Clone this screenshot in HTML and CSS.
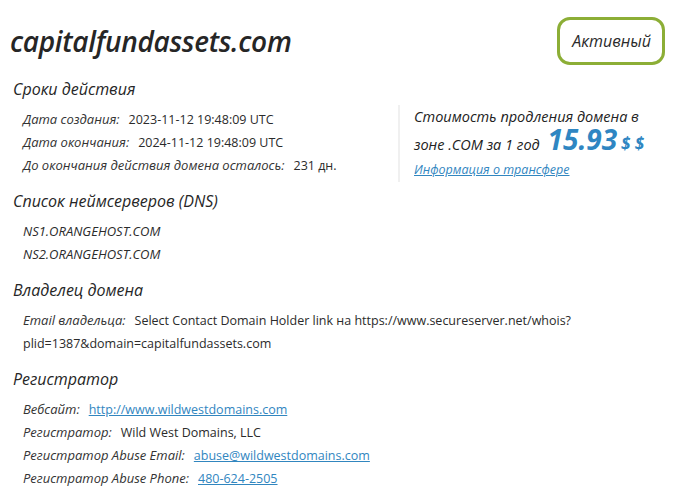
FILE: index.html
```html
<!DOCTYPE html>
<html lang="ru">
<head>
    <meta charset="UTF-8">
    <meta name="viewport" content="width=device-width, initial-scale=1.0">
    <title>capitalfundassets.com — Whois</title>
    <link rel="stylesheet" href="styles.css">
</head>
<body>

<div class="whois">
    <!-- Шапка: домен и статус -->
    <div class="whois-head">
        <h1 class="domain-name">capitalfundassets.com</h1>
        <span class="status-badge">Активный</span>
    </div>

    <!-- Сроки + цена продления -->
    <div class="top-row">
        <div class="section">
            <h2 class="section-title">Сроки действия</h2>
            <div class="row"><span class="label">Дата создания:</span>2023-11-12 19:48:09 UTC</div>
            <div class="row"><span class="label">Дата окончания:</span>2024-11-12 19:48:09 UTC</div>
            <div class="row"><span class="label">До окончания действия домена осталось:</span>231 дн.</div>
        </div>

        <div class="price-box">
            <p class="price-text">Стоимость продления домена в</p>
            <p class="price-text">зоне .COM за 1 год <span class="price">15.93</span> <span class="currency">$ $</span></p>
            <a href="#" class="link price-link">Информация о трансфере</a>
        </div>
    </div>

    <div class="section">
        <h2 class="section-title">Список неймсерверов (DNS)</h2>
        <div class="row ns">NS1.ORANGEHOST.COM</div>
        <div class="row ns">NS2.ORANGEHOST.COM</div>
    </div>

    <div class="section">
        <h2 class="section-title">Владелец домена</h2>
        <div class="row"><span class="label">Email владельца:</span>Select Contact Domain Holder link на https://www.secureserver.net/whois?<wbr>plid=1387&amp;domain=capitalfundassets.com</div>
    </div>

    <div class="section">
        <h2 class="section-title">Регистратор</h2>
        <div class="row"><span class="label">Вебсайт:</span><a href="#" class="link">http://www.wildwestdomains.com</a></div>
        <div class="row"><span class="label">Регистратор:</span>Wild West Domains, LLC</div>
        <div class="row"><span class="label">Регистратор Abuse Email:</span><a href="#" class="link">abuse@wildwestdomains.com</a></div>
        <div class="row"><span class="label">Регистратор Abuse Phone:</span><a href="#" class="link">480-624-2505</a></div>
    </div>
</div>

</body>
</html>
```

FILE: styles.css
```css
/* страница whois */
body {
    margin: 0;
    background: #fff;
    color: #2b2b2b;
    font-family: "Open Sans", "Noto Sans", sans-serif;
}

.whois {
    width: 655px;
    padding: 17px 0 0 10px;
}

.whois-head {
    display: flex;
    justify-content: space-between;
    align-items: center;
    height: 48px;
}

.domain-name {
    margin: 0;
    font-size: 28px;
    font-style: italic;
    font-weight: 600;
    color: #262626;
    letter-spacing: -0.3px;
}

.status-badge {
    box-sizing: border-box;
    height: 48px;
    padding: 0 11px 0 12px;
    display: flex;
    align-items: center;
    border: 3px solid #8cae36;
    border-radius: 13px;
    font-size: 16px;
    font-style: italic;
    color: #2b2b2b;
}

.top-row {
    display: flex;
    margin-top: 12px;
}

.top-row .section {
    width: 388px;
}

.section {
    margin-bottom: 12px;
}

.section-title {
    margin: 0 0 7px 3px;
    font-size: 16px;
    line-height: 24px;
    font-weight: 500;
    font-style: italic;
    color: #262626;
}

.row {
    padding-left: 13px;
    font-size: 12.5px;
    line-height: 23px;
    color: #2b2b2b;
}

.label {
    font-size: 13px;
    font-style: italic;
    margin-right: 9px;
    color: #333;
}

.ns {
    font-size: 13px;
    font-style: italic;
}

.link {
    color: #3186bf;
    text-decoration: underline;
}

/* блок цены продления */
.price-box {
    margin-top: 28px;
    height: 77px;
    padding-left: 14px;
    border-left: 2px solid #f0f0f0;
}

.price-text {
    margin: 0;
    font-size: 14.5px;
    line-height: 24px;
    font-style: italic;
    font-weight: 500;
    color: #222;
}

.price {
    display: inline-block;
    line-height: 0.75;
    font-size: 28px;
    font-weight: 700;
    font-style: italic;
    color: #2f86c2;
    margin-left: 4px;
}

.currency {
    font-size: 17px;
    font-weight: 700;
    color: #2f86c2;
}

.price-link {
    display: block;
    margin-top: 1px;
    font-size: 12.5px;
    line-height: 24px;
    font-style: italic;
}
```
